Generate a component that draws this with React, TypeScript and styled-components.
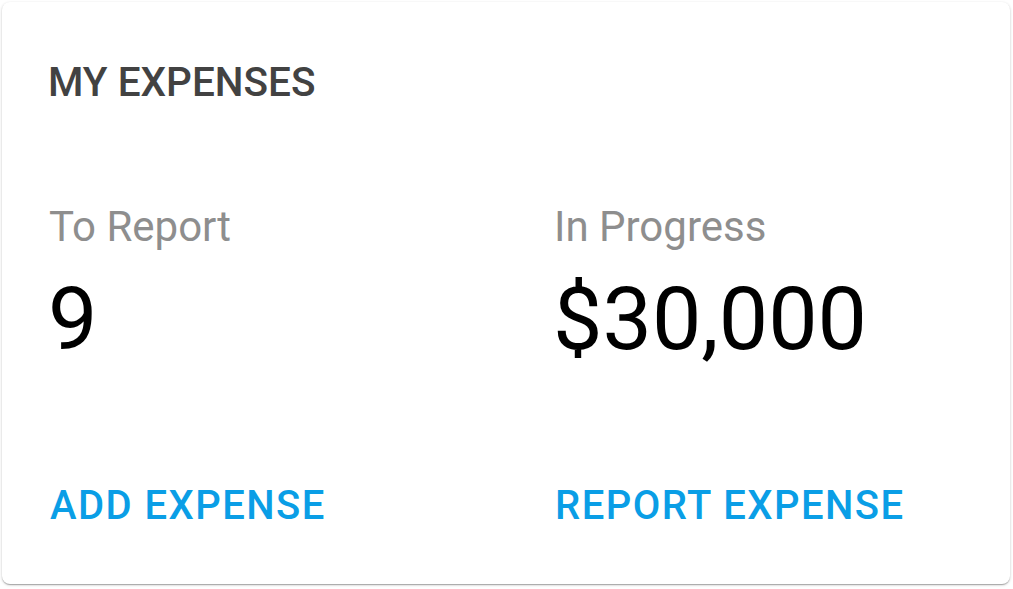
import React from "react";
import styled, { createGlobalStyle } from "styled-components";

const GlobalStyle = createGlobalStyle`
  html, body {
    margin: 0;
    padding: 0;
    background: #ffffff;
  }
  body {
    font-family: Roboto, "Liberation Sans", Arial, sans-serif;
  }
`;

const Page = styled.div`
  padding: 2px 3px 5px 2px;
`;

const Card = styled.section`
  box-sizing: border-box;
  width: 1008px;
  height: 582px;
  background: #ffffff;
  border-radius: 8px;
  box-shadow: 0 1px 3px rgba(0, 0, 0, 0.2), 0 1px 1px rgba(0, 0, 0, 0.14),
    0 2px 1px -1px rgba(0, 0, 0, 0.12);
  padding: 60px 46px 0 46px;
  display: flex;
  flex-direction: column;
`;

const Title = styled.h2`
  margin: 0;
  font-size: 40.5px;
  line-height: 40px;
  font-weight: 500;
  color: #424242;
`;

const Columns = styled.div`
  display: grid;
  grid-template-columns: 1fr 1fr;
  column-gap: 94px;
  margin-top: 104px;
`;

const Column = styled.div`
  display: flex;
  flex-direction: column;
  align-items: flex-start;
  padding-left: 2px;
`;

const Label = styled.div`
  margin-left: -1px;
  font-size: 42px;
  line-height: 42px;
  color: #8e8e8e;
`;

const Value = styled.div`
  margin-top: 27px;
  margin-left: -2px;
  font-size: 88px;
  line-height: 88px;
  color: #000000;
`;

const Action = styled.button`
  margin-top: 123px;
  padding: 0;
  border: none;
  background: none;
  cursor: pointer;
  font-family: inherit;
  font-size: 40px;
  line-height: 40px;
  font-weight: 500;
  letter-spacing: 1.45px;
  color: #0a9ee6;
  text-transform: uppercase;
`;

const stats = [
  { label: "To Report", value: "9", action: "Add Expense" },
  { label: "In Progress", value: "$30,000", action: "Report Expense" },
];

export default function App() {
  return (
    <>
      <GlobalStyle />
      <Page>
        <Card>
          <Title>MY EXPENSES</Title>
          <Columns>
            {stats.map((s) => (
              <Column key={s.label}>
                <Label>{s.label}</Label>
                <Value>{s.value}</Value>
                <Action>{s.action}</Action>
              </Column>
            ))}
          </Columns>
        </Card>
      </Page>
    </>
  );
}
